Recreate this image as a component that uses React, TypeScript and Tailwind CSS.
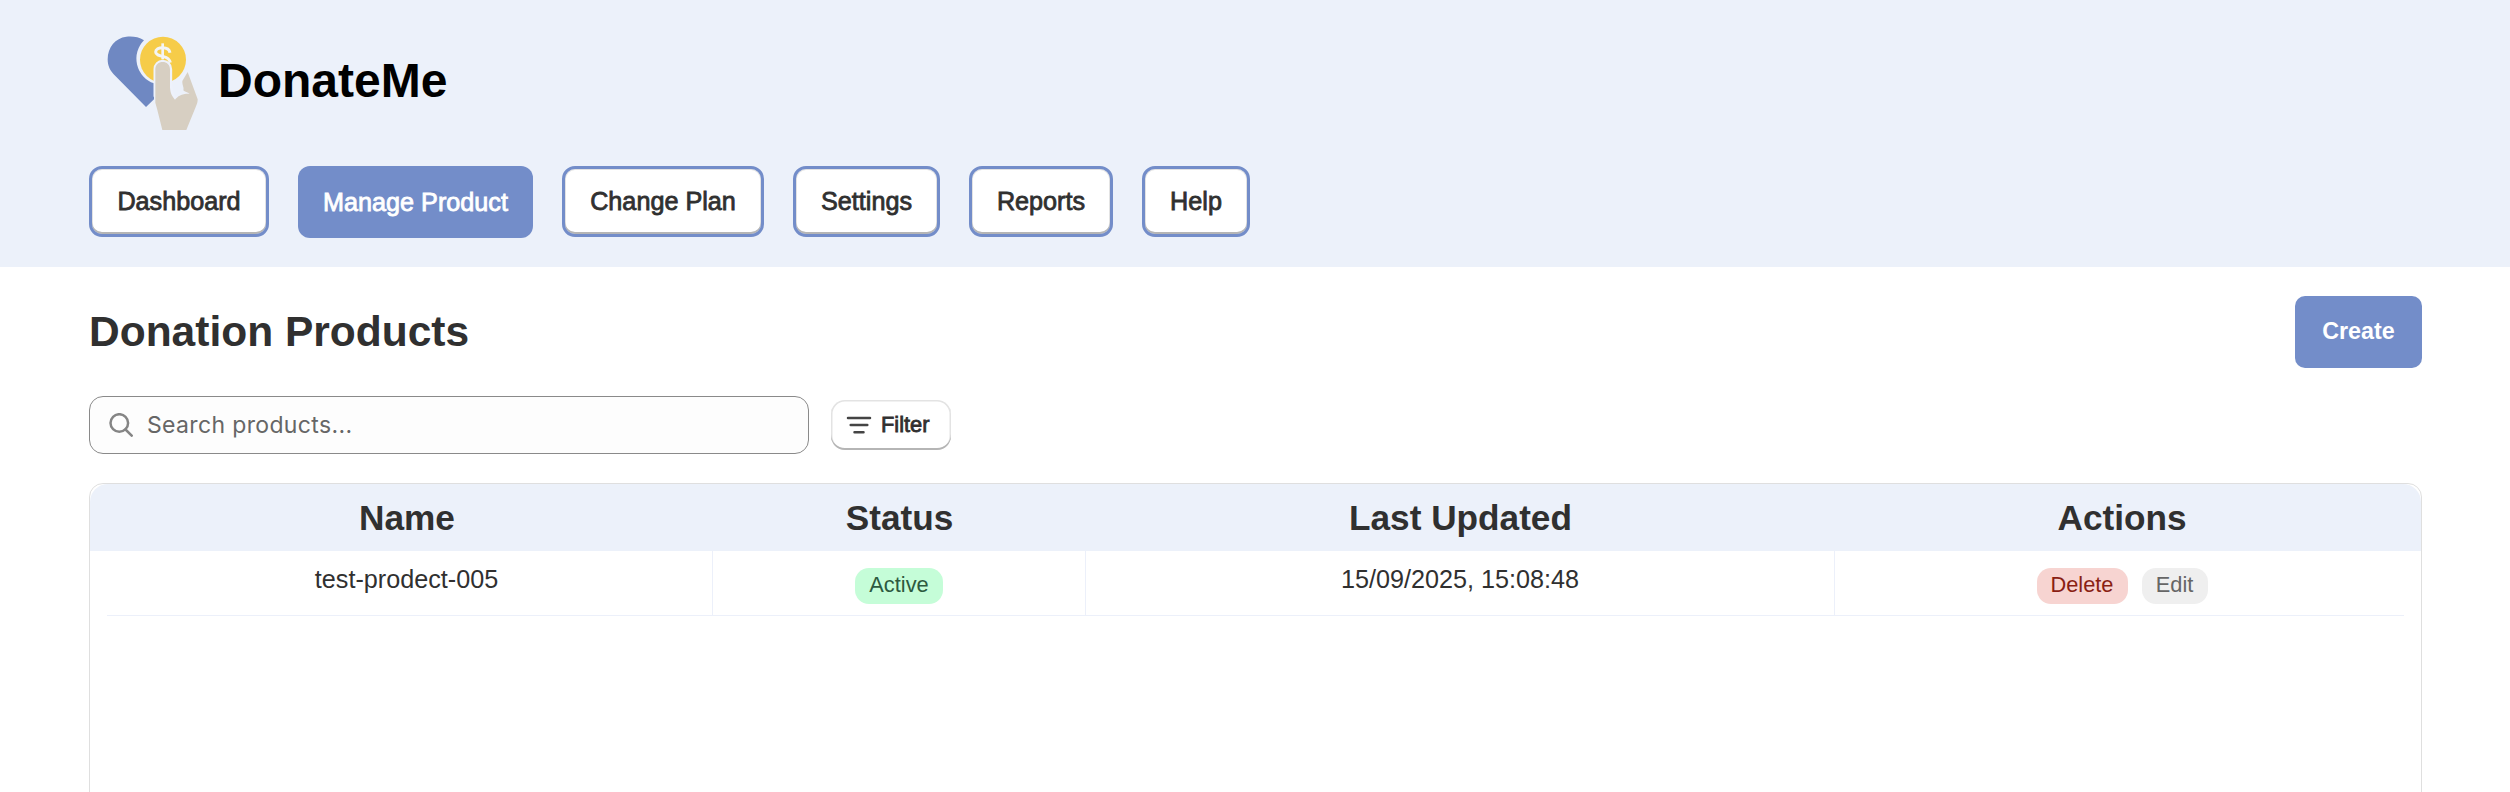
import React from "react";

const navItems = [
  { label: "Dashboard", width: "w-[180px]" },
  { label: "Manage Product", width: "w-[235px]", active: true },
  { label: "Change Plan", width: "w-[202px]" },
  { label: "Settings", width: "w-[147px]" },
  { label: "Reports", width: "w-[144px]" },
  { label: "Help", width: "w-[108px]" },
];

function Logo() {
  return (
    <svg className="h-[94px] w-[91px] shrink-0" viewBox="20 18 273 282">
      <path
        fill="#6f88c2"
        d="M131 31 C115 20 95 18 78 20 C45 24 22 52 22 88 C22 108 30 122 40 133 L137 231 L161 208 V160 A78 78 0 0 1 131 31 Z"
      />
      <circle cx="188" cy="89" r="69" fill="#f6cc49" />
      <path
        fill="none"
        stroke="#f4f5f5"
        strokeWidth="9"
        d="M209 68 C207 57 198 53 187 53 C175 53 166 58 166 66 C166 75 178 77 190 80 C202 83 208 89 210 98"
      />
      <path stroke="#f4f5f5" strokeWidth="8" d="M187 40 V88" />
      <path
        fill="none"
        stroke="#eef2fb"
        strokeWidth="13"
        strokeLinejoin="round"
        d="M166 200 V118 C166 104 175 96 187 96 C199 96 209 104 209 118 V172 L214 192 L224 209 L266 190 L246 150 L262 126"
      />
      <path
        fill="#d7cfc2"
        d="M165 218 V118 C165 104 175 96 187 96 C199 96 209 104 209 118 V172 C210 192 216 200 224 209 C232 198 245 190 268 191 C262 187 253 185 249 181 C252 172 245 166 246 153 L262 126 L292 208 C292 217 290 222 287 229 L258 300 H186 L171 240 Z"
      />
    </svg>
  );
}

function SearchIcon() {
  return (
    <svg className="ml-[19px] size-[24px]" viewBox="0 0 24 24" fill="none" stroke="#858585" strokeWidth="2.500">
      <circle cx="10.300" cy="10" r="8.800" />
      <path d="M16.500 16.500 L22.700 22.700" strokeLinecap="round" />
    </svg>
  );
}

function FilterIcon() {
  return (
    <svg className="h-[18px] w-[26px]" viewBox="0 0 26 18" stroke="#444" strokeWidth="2.500" strokeLinecap="round">
      <path d="M2 2H24M4.700 9H21.300M8.500 16.200H17.500" />
    </svg>
  );
}

export default function App() {
  return (
    <div className="flex h-[792px] flex-col overflow-hidden bg-white font-['Liberation_Sans',Arial,sans-serif] text-[#303030]">
      <header className="h-[267px] shrink-0 bg-[#ecf1fa] pl-[89px]">
        <div className="flex h-[166px] items-start pt-[36px] pl-[18px]">
          <Logo />
          <h1 className="mt-[17px] ml-[20px] text-[48px] leading-[55px] font-bold text-black">DonateMe</h1>
        </div>
        <nav className="flex items-start gap-[29px]">
          {navItems.map((n) => (
            <button
              key={n.label}
              className={
                n.active
                  ? `${n.width} h-[72px] rounded-[12px] bg-[#738dc9] pt-px text-[25.2px] whitespace-nowrap text-white [-webkit-text-stroke:0.8px]`
                  : `${n.width} h-[71px] rounded-[13px] border-[3px] border-[#738dc9] bg-white text-[25.2px] whitespace-nowrap shadow-[inset_0_-2px_0_#b5b5b5,inset_0_0_0_1px_#e3e3e3] [-webkit-text-stroke:0.8px]`
              }
            >
              {n.label}
            </button>
          ))}
        </nav>
      </header>
      <main className="flex flex-1 flex-col pt-[29px] pr-[88px] pl-[89px]">
        <div className="flex h-[72px] items-center justify-between">
          <h2 className="text-[42.5px] leading-[50px] font-bold">Donation Products</h2>
          <button className="h-[72px] w-[127px] rounded-[10px] bg-[#738dc9] pb-px text-[23.3px] font-bold text-white">
            Create
          </button>
        </div>
        <div className="mt-[28px] flex h-[58px] items-center">
          <div className="flex h-[58px] w-[720px] items-center rounded-[14px] border border-[#8a8a8a] bg-[#fdfdfd]">
            <SearchIcon />
            <span className="ml-[14px] font-['Inter',sans-serif] text-[23px] leading-[28px] tracking-[0.35px] text-[#666]">
              Search products...
            </span>
          </div>
          <button className="ml-[22px] flex h-[50px] w-[120px] items-center rounded-[14px] bg-white pl-[15px] text-[21.8px] shadow-[inset_0_-2px_0_#b5b5b5,inset_0_0_0_1.5px_#e3e3e3] [-webkit-text-stroke:0.8px]">
            <FilterIcon />
            <span className="ml-[9px]">Filter</span>
          </button>
        </div>
        <section className="mt-[29px] h-[360px] rounded-t-[14px] border border-[#dfdfdf]">
          <div className="grid h-[67px] grid-cols-[623px_373px_749px_1fr] items-center rounded-t-[18px] bg-[#ecf1fa] text-center text-[35.2px] leading-[40px] font-bold">
            <div className="pl-[11px]">Name</div>
            <div>Status</div>
            <div>Last Updated</div>
            <div className="pr-[12px]">Actions</div>
          </div>
          <div className="grid h-[64px] grid-cols-[623px_373px_749px_1fr] text-center text-[25.2px] leading-[30px]">
            <div className="border-r border-[#ecf0fa] pt-[13px] pl-[11px]">test-prodect-005</div>
            <div className="flex justify-center border-r border-[#ecf0fa] pt-[17px]">
              <span className="h-[36px] w-[88px] rounded-[14px] bg-[#c5fdd8] text-[21.8px] leading-[34px] text-[#2d5a3f]">
                Active
              </span>
            </div>
            <div className="border-r border-[#ecf0fa] pt-[13px]">15/09/2025, 15:08:48</div>
            <div className="flex justify-center gap-[14px] pt-[17px] pr-[12px]">
              <button className="flex h-[36px] w-[91px] justify-center rounded-[14px] bg-[#f7d4d1] text-[21.8px] leading-[34px] text-[#8a1f14]">
                Delete
              </button>
              <button className="flex h-[36px] w-[66px] justify-center rounded-[14px] bg-[#efefef] text-[21.8px] leading-[34px] text-[#666]">
                Edit
              </button>
            </div>
          </div>
          <div className="mx-[17px] h-px bg-[#ecf0fa]" />
        </section>
      </main>
    </div>
  );
}
